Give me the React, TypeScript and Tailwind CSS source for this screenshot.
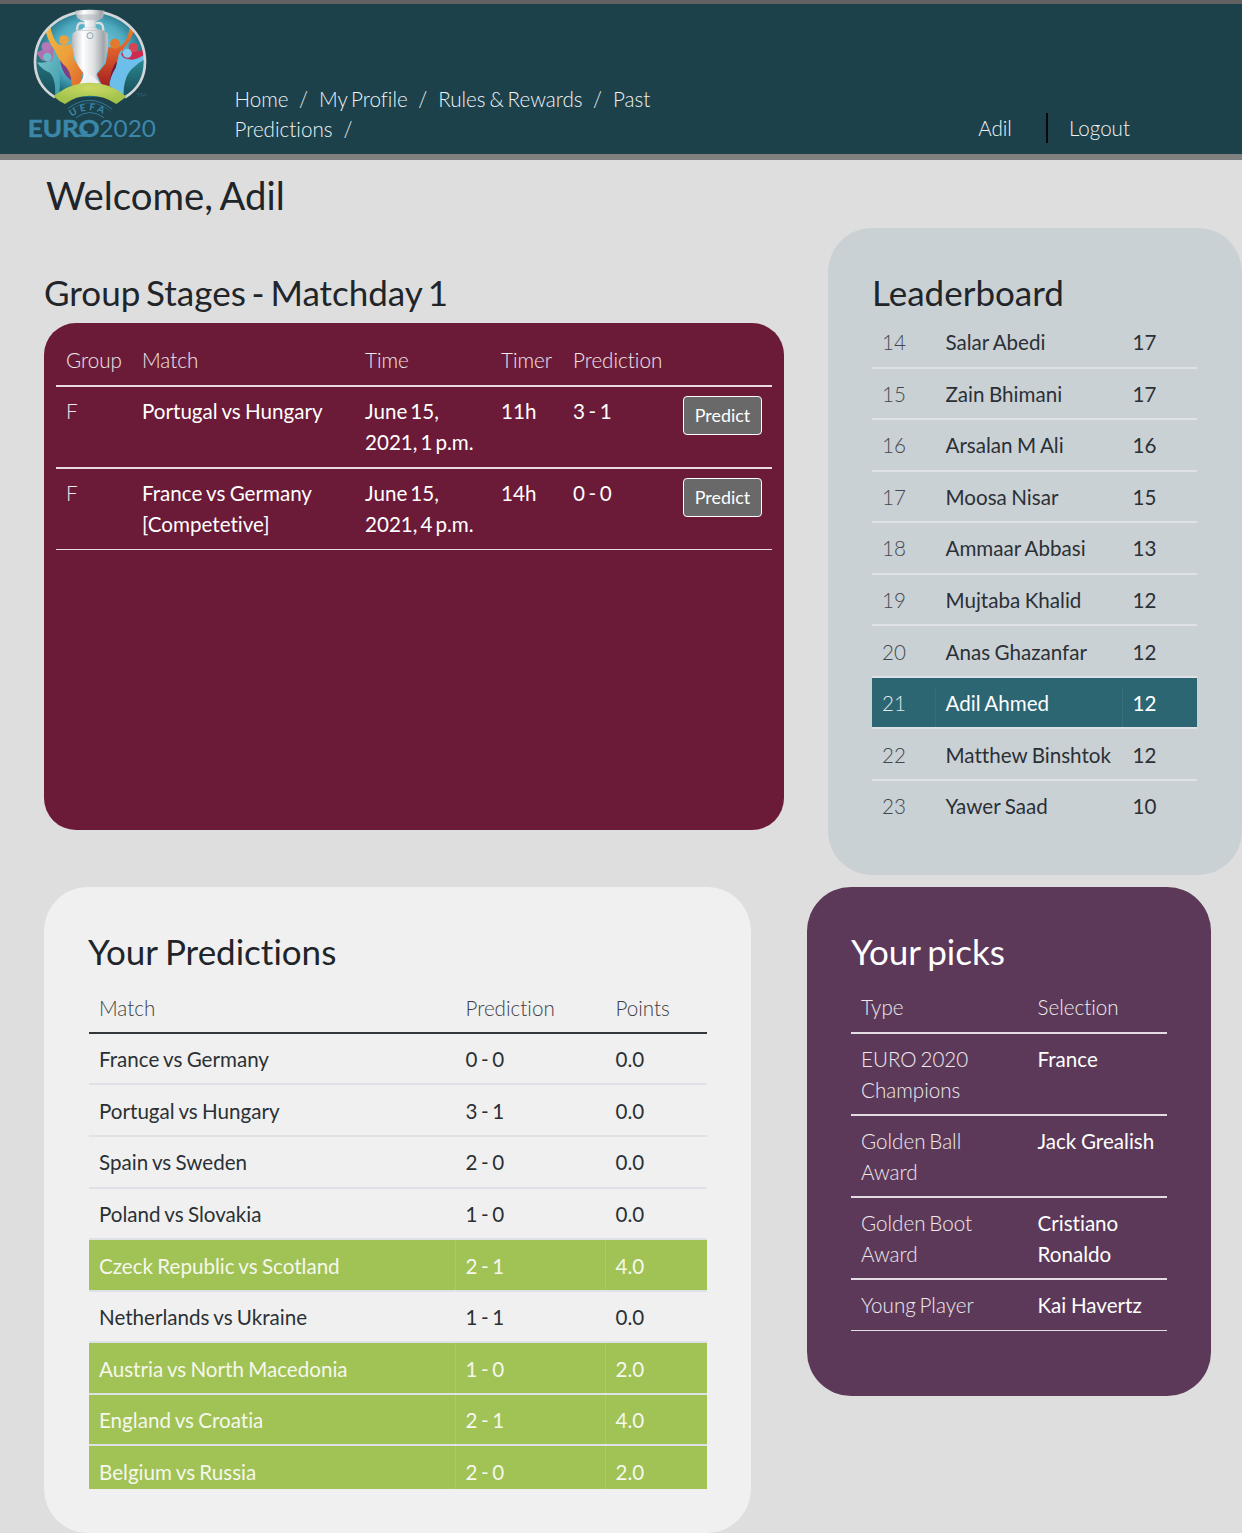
import React from "react";

function Logo() {
  return (
    <svg viewBox="50 25 390 390" className="block h-[130px] w-[130px] overflow-visible leading-none [word-spacing:0]" fontFamily="Lato, sans-serif">
      <defs>
        <radialGradient id="sky" cx="50%" cy="45%" r="50%">
          <stop offset="0" stopColor="#8fd6e6" />
          <stop offset="0.65" stopColor="#4fabc1" />
          <stop offset="1" stopColor="#176478" />
        </radialGradient>
        <linearGradient id="cup" x1="0" x2="1" y1="0" y2="0">
          <stop offset="0" stopColor="#b9bcc0" />
          <stop offset="0.3" stopColor="#ffffff" />
          <stop offset="0.6" stopColor="#dfe1e3" />
          <stop offset="0.88" stopColor="#a0a5aa" />
          <stop offset="1" stopColor="#c5c8cb" />
        </linearGradient>
        <linearGradient id="orangeL" x1="0" x2="1" y1="0" y2="1">
          <stop offset="0" stopColor="#f2b73f" />
          <stop offset="0.5" stopColor="#eda03b" />
          <stop offset="1" stopColor="#dc5f2a" />
        </linearGradient>
        <linearGradient id="orangeR" x1="0" x2="0" y1="0" y2="1">
          <stop offset="0" stopColor="#e9812d" />
          <stop offset="0.5" stopColor="#d7552a" />
          <stop offset="1" stopColor="#a42020" />
        </linearGradient>
        <linearGradient id="teal" x1="0" x2="1" y1="0" y2="1">
          <stop offset="0" stopColor="#7cc5cf" />
          <stop offset="1" stopColor="#3e9dab" />
        </linearGradient>
        <linearGradient id="shade" x1="0" x2="0" y1="0" y2="1">
          <stop offset="0" stopColor="#2a8792" />
          <stop offset="1" stopColor="#174d58" />
        </linearGradient>
        <radialGradient id="hill" cx="50%" cy="25%" r="60%">
          <stop offset="0" stopColor="#cbd962" />
          <stop offset="1" stopColor="#a3c34c" />
        </radialGradient>
        <clipPath id="disc">
          <path d="M134 293C94 268 74 232 74 186C74 98 148 35 239 35S404 98 404 186C404 232 384 268 344 293Z" />
        </clipPath>
        <path id="arc" d="M184 352Q239 310 300 357" />
      </defs>
      <g clipPath="url(#disc)">
        <rect x="70" y="30" width="340" height="280" fill="url(#sky)" />
        <path d="M70 120Q92 165 132 178L140 290H100L70 210Z" fill="url(#shade)" />
        <path d="M404 180Q350 195 338 235Q338 270 350 292H410Z" fill="url(#shade)" />
        <path d="M148 165Q175 175 188 200V245Q150 225 148 165Z" fill="#7d3e83" />
        <path d="M320 170Q322 220 296 246V195Z" fill="#7b1839" />
        <path d="M78 160Q92 150 98 151Q114 156 122 140L131 152V190L94 182Z" fill="#b26fae" />
        <circle cx="108" cy="141" r="14" fill="#b479b5" />
        <path d="M328 160Q352 161 367 153Q383 158 402 147L405 167Q383 183 346 180Z" fill="#cf2b50" />
        <circle cx="369" cy="144" r="14" fill="#d74455" />
        <path d="M80 188Q100 192 115 184Q125 188 129 172L131 148Q134 165 142 183Q152 215 147 290H134Q138 235 116 218Q96 211 80 188Z" fill="url(#teal)" />
        <circle cx="111" cy="172" r="13" fill="#70bdc9" />
        <path d="M109 84L119 78Q127 117 143 134Q162 141 185 132L191 180L218 216L210 254L184 275Q187 226 168 203Q144 181 132 150Q113 126 105 91Z" fill="url(#orangeL)" />
        <circle cx="161" cy="121" r="14.5" fill="#eca13f" />
        <path d="M358 80L371 91Q363 121 343 142Q329 162 322 181Q299 207 297 258H275L260 224L286 191L295 142Q327 150 343 126Q355 112 358 80Z" fill="url(#orangeR)" />
        <circle cx="314" cy="132" r="15" fill="#e27a2c" />
        <path d="M335 147Q328 169 341 176L366 181Q388 176 405 164V178Q385 188 369 204Q340 225 339 290L298 258Q299 230 316 205Q323 187 325 165Z" fill="#6cbfea" />
        <circle cx="351" cy="161" r="13.5" fill="#83c9f0" />
      </g>
      <path d="M134 293C94 268 74 232 74 186C74 98 148 35 239 35S404 98 404 186C404 232 384 268 344 293" fill="none" stroke="#d2d6d8" strokeWidth="8" />
      <path d="M224 70H210Q199 72 200 99M255 70H268Q280 72 279 99" fill="none" stroke="#d9dcdf" strokeWidth="7" />
      <path d="M195 33Q239 28 283 33L277 53Q272 61 256 65V84H223V65Q207 61 200 53Z" fill="url(#cup)" />
      <path d="M197 47Q239 40 281 47L277 57Q239 66 201 57Z" fill="#a7adb1" opacity=".5" />
      <path d="M187 101Q199 91 218 88V84H260V88Q281 91 292 101Q295 126 290 152Q284 192 259 221Q255 231 274 254H206Q223 233 219 220Q195 194 188 152Q183 124 187 101Z" fill="url(#cup)" />
      <path d="M239 224Q222 235 213 250H267Q254 235 239 224Z" fill="#f0f1f2" />
      <path d="M196 92H282" stroke="#b3b8bc" strokeWidth="2" />
      <circle cx="239" cy="108" r="9" fill="#e8ecee" stroke="#8ca6b4" strokeWidth="3" />
      <path d="M130 290Q178 249 239 249T348 291L318 313Q282 288 239 288T164 313Q146 306 130 290Z" fill="url(#hill)" />
      <path d="M172 327Q239 276 306 329M197 354Q239 323 281 354" fill="none" stroke="#337a99" strokeWidth="3" />
      <path d="M180 332Q239 286 300 334" fill="none" stroke="#337a99" strokeWidth="1.5" />
      <text fill="#3b89a8" fontSize="29" fontWeight="700" letterSpacing="9"><textPath href="#arc">UEFA</textPath></text>
      <text x="378" y="292" fill="#337a99" fontSize="20" textLength="31" lengthAdjust="spacingAndGlyphs">TM</text>
      <text x="52" y="411" fill="#3b87a9" fontSize="69" fontWeight="700" stroke="#3b87a9" strokeWidth="1.5" textLength="216" lengthAdjust="spacingAndGlyphs">EURO</text>
      <path d="M193 408H240M215 385Q217 398 232 399" stroke="#3b87a9" strokeWidth="7" fill="none" />
      <text x="267" y="411" fill="#3b87a9" fontSize="69" fontWeight="400" textLength="170" lengthAdjust="spacingAndGlyphs">2020</text>
    </svg>
  );
}

const fixtures = [
  ["F", "Portugal vs Hungary", "", "11h", "3 - 1", "June 15, 2021, 1 p.m."],
  ["F", "France vs Germany", "[Competetive]", "14h", "0 - 0", "June 15, 2021, 4 p.m."],
];

const leaders: [number, string, number][] = [
  [14, "Salar Abedi", 17],
  [15, "Zain Bhimani", 17],
  [16, "Arsalan M Ali", 16],
  [17, "Moosa Nisar", 15],
  [18, "Ammaar Abbasi", 13],
  [19, "Mujtaba Khalid", 12],
  [20, "Anas Ghazanfar", 12],
  [21, "Adil Ahmed", 12],
  [22, "Matthew Binshtok", 12],
  [23, "Yawer Saad", 10],
];

const predictions = [
  ["France vs Germany", "0 - 0", "0.0"],
  ["Portugal vs Hungary", "3 - 1", "0.0"],
  ["Spain vs Sweden", "2 - 0", "0.0"],
  ["Poland vs Slovakia", "1 - 0", "0.0"],
  ["Czeck Republic vs Scotland", "2 - 1", "4.0"],
  ["Netherlands vs Ukraine", "1 - 1", "0.0"],
  ["Austria vs North Macedonia", "1 - 0", "2.0"],
  ["England vs Croatia", "2 - 1", "4.0"],
  ["Belgium vs Russia", "2 - 0", "2.0"],
];

const picks = [
  ["EURO 2020 Champions", "France"],
  ["Golden Ball Award", "Jack Grealish"],
  ["Golden Boot Award", "Cristiano Ronaldo"],
  ["Young Player", "Kai Havertz"],
];

function Slash() {
  return <span className="mr-[11px] ml-[10.5px]">/</span>;
}

function Header() {
  return (
    <header className="flex h-[160px] border-t-4 border-b-6 border-t-[#626262] border-b-[#808080] bg-[#1c414b] font-light text-[#f0f3f4]">
      <div className="w-[234.5px] shrink-0 pt-[4px] pl-[27px]">
        <Logo />
      </div>
      <nav className="flex w-[430px] flex-wrap content-start pt-[79.5px] leading-[30px]">
        <span>Home</span>
        <Slash />
        <span>My Profile</span>
        <Slash />
        <span>Rules &amp; Rewards</span>
        <Slash />
        <span>Past</span>
        <span className="basis-full">
          Predictions<span className="ml-[11px]">/</span>
        </span>
      </nav>
      <div className="ml-auto flex items-end pr-[112px] pb-[11px] leading-[30px]">
        <span className="mr-[34px]">Adil</span>
        <span className="border-l-2 border-[#05090b] pl-[21px]">Logout</span>
      </div>
    </header>
  );
}

const head = "text-[35px] leading-[42px] h-[44px] text-[#212529]";

function Matches() {
  const cols =
    "grid grid-cols-[76px_223px_136px_72px_110px_99px] border-[#ead9df] [&>*]:px-[10px]";
  return (
    <section className="w-[740px] pt-[43px]">
      <h2 className={`${head} [word-spacing:-0.09em]`}>Group Stages - Matchday 1</h2>
      <div className="mt-[8px] h-[507px] rounded-[32px] bg-[#6b1b38] px-[12px] pt-[12px] text-white">
        <div className={`${cols} h-[52px] border-b-2 pt-[10px] font-light text-white/90`}>
          <span>Group</span>
          <span>Match</span>
          <span>Time</span>
          <span>Timer</span>
          <span>Prediction</span>
        </div>
        {fixtures.map((f, i) => (
          <div key={i} className={`${cols} pt-[9.4px] ${i ? "h-[81px] border-b" : "h-[82px] border-b-2"}`}>
            <span className="font-light text-white/90">{f[0]}</span>
            <span className="[word-spacing:-0.05em]">
              {f[1]}
              <br />
              {f[2]}
            </span>
            <span className="[word-spacing:-0.11em]">{f[5]}</span>
            <span>{f[3]}</span>
            <span>{f[4]}</span>
            <div>
              <button className="block h-[39px] w-[79px] rounded-[4px] border border-white bg-[#696969] text-[17.9px] leading-[35px]">
                Predict
              </button>
            </div>
          </div>
        ))}
      </div>
    </section>
  );
}

function Leaderboard() {
  return (
    <aside className="h-[647px] w-[414px] rounded-[44px] bg-[#cad1d5] px-[44px] pt-[43px]">
      <h2 className={head}>Leaderboard</h2>
      <div className="mt-[2px] h-[514px] w-[325px] overflow-hidden">
        {leaders.map(([rank, name, pts]) => (
          <div
            key={rank}
            className={`grid h-[51.55px] grid-cols-[63.5px_187px_74.5px] border-b-2 pt-[10.3px] [&>*]:px-[10px] ${
              rank === 23 ? "border-transparent" : "border-[#dee2e6]"
            } ${rank === 21 ? "divide-x divide-[#38717e] bg-[#2c6673] text-white" : "text-[#2b3035]"}`}
          >
            <span className="font-light opacity-85">{rank}</span>
            <span className="[word-spacing:-0.04em]">{name}</span>
            <span>{pts}</span>
          </div>
        ))}
      </div>
    </aside>
  );
}

function Predictions() {
  const cols =
    "grid h-[51.55px] grid-cols-[366.5px_150px_101.5px] border-b-2 [&>*]:px-[10px] [&>*]:pt-[10.4px]";
  return (
    <section className="h-[646px] w-[707px] rounded-[44px] bg-[#f0f0f0] px-[44px] pt-[43px]">
      <h2 className={`${head} [word-spacing:-0.04em]`}>Your Predictions</h2>
      <div className="mt-[8px] ml-[1px] h-[507px] overflow-hidden pt-[0.4px]">
        <div className={`${cols} border-[#32373c] font-light text-[#3c4146]`}>
          <span>Match</span>
          <span>Prediction</span>
          <span>Points</span>
        </div>
        {predictions.map(([m, p, s]) => (
          <div
            key={m}
            className={`${cols} border-[#dee2e6] ${
              s === "0.0" ? "text-[#2b3035]" : "divide-x divide-[#acc96b] bg-[#a1c255] text-[#f5f8ec]"
            }`}
          >
            <span className="[word-spacing:-0.05em]">{m}</span>
            <span>{p}</span>
            <span>{s}</span>
          </div>
        ))}
      </div>
    </section>
  );
}

function Picks() {
  const cols =
    "grid grid-cols-[176.5px_139px] border-[#e4dce3] [&>*]:pl-[10px] [&>*]:pt-[10.4px]";
  return (
    <section className="h-[509px] w-[404px] rounded-[44px] bg-[#5c3958] px-[44px] pt-[43px] text-white">
      <h2 className="h-[44px] text-[35px] leading-[42px] [word-spacing:-0.06em]">Your picks</h2>
      <div className="mt-[8px] w-[315.5px]">
        <div className={`${cols} h-[52px] border-b-2 font-light text-white/90`}>
          <span>Type</span>
          <span>Selection</span>
        </div>
        {picks.map(([t, s], i) => (
          <div key={t} className={`${cols} ${i === 3 ? "h-[51px] border-b" : "h-[82px] border-b-2"}`}>
            <span className="pr-[40px] font-light text-white/90">{t}</span>
            <span className={i === 2 ? "pr-[30px]" : "[word-spacing:-0.03em]"}>{s}</span>
          </div>
        ))}
      </div>
    </section>
  );
}

export default function App() {
  return (
    <div className="h-[1533px] w-[1242px] overflow-hidden bg-[#dedede] font-[Lato,sans-serif] text-[20.6px] leading-[30.6px] [font-variant-ligatures:none] [word-spacing:-0.085em]">
      <Header />
      <h1 className="h-[68px] pt-[11px] pl-[46px] text-[38.3px] leading-[48px] text-[#212529]">Welcome, Adil</h1>
      <main className="pl-[44px]">
        <div className="flex gap-[44px]">
          <Matches />
          <Leaderboard />
        </div>
        <div className="mt-[12px] flex items-start gap-[56px]">
          <Predictions />
          <Picks />
        </div>
      </main>
    </div>
  );
}
